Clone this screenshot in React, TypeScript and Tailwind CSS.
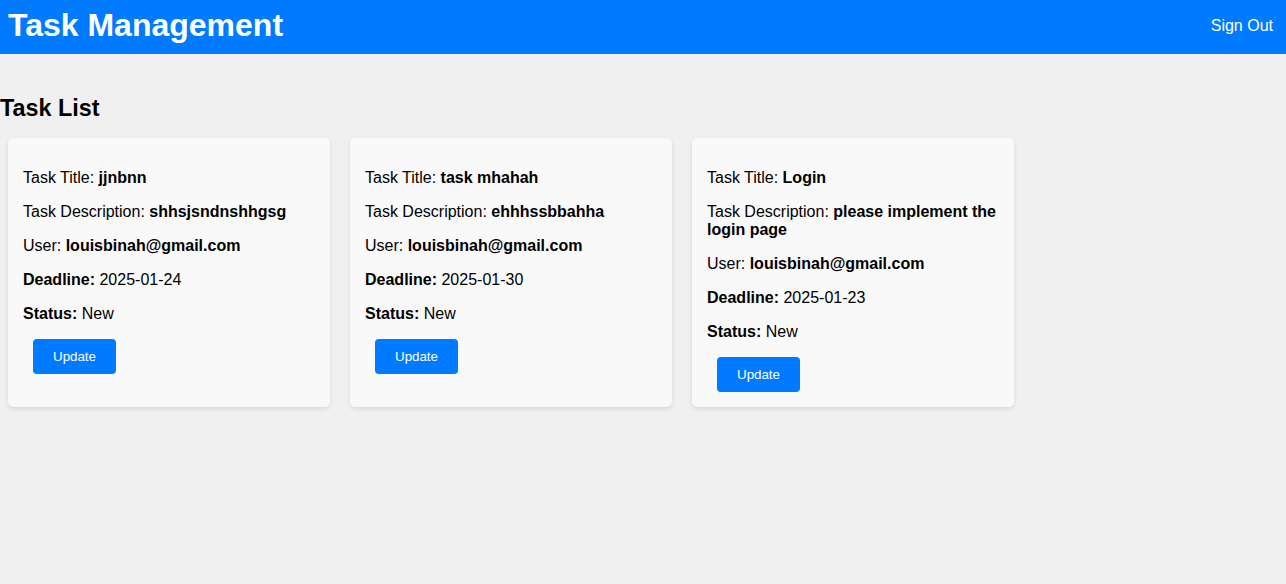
import React from 'react';

type Task = {
  title: string;
  description: string;
  user: string;
  deadline: string;
  status: string;
};

const tasks: Task[] = [
  { title: 'jjnbnn', description: 'shhsjsndnshhgsg', user: 'louisbinah@gmail.com', deadline: '2025-01-24', status: 'New' },
  { title: 'task mhahah', description: 'ehhhssbbahha', user: 'louisbinah@gmail.com', deadline: '2025-01-30', status: 'New' },
  { title: 'Login', description: 'please implement the login page', user: 'louisbinah@gmail.com', deadline: '2025-01-23', status: 'New' },
];

const TaskCard: React.FC<{ task: Task }> = ({ task }) => {
  return (
    <div className="w-[322px] bg-[#f9f9f9] rounded-[5px] shadow-[0_2px_4px_rgba(0,0,0,0.1)] p-[15px]">
      <p className="mt-4 mb-4 leading-[18px]">
        Task Title: <strong className="font-bold">{task.title}</strong>
      </p>
      <p className="mb-4 leading-[18px]">
        Task Description: <strong className="font-bold">{task.description}</strong>
      </p>
      <p className="mb-4 leading-[18px]">
        User: <strong className="font-bold">{task.user}</strong>
      </p>
      <p className="mb-4 leading-[18px]">
        <strong className="font-bold">Deadline:</strong> {task.deadline}
      </p>
      <p className="mb-4 leading-[18px]">
        <strong className="font-bold">Status:</strong> {task.status}
      </p>
      <button className="ml-[10px] px-5 h-[35px] bg-[#007bff] text-white text-[13.33px] rounded-[4px]">
        Update
      </button>
    </div>
  );
};

export default function App() {
  return (
    <div className="min-h-[584px] bg-[#f0f0f0] text-black font-['Liberation_Sans',Arial,sans-serif] text-base">
      <header className="h-[54px] bg-[#007bff] flex items-center justify-between pl-2 pr-[13px] pb-[3px]">
        <h1 className="text-[32px] font-bold text-white leading-[37px]">Task Management</h1>
        <button className="text-white text-base">Sign Out</button>
      </header>
      <main>
        <h2 className="text-[23.4px] font-bold leading-[28px] mt-[40px] mb-[16px]">Task List</h2>
        <div className="flex gap-5 px-2 items-stretch">
          {tasks.map((t) => (
            <TaskCard key={t.title} task={t} />
          ))}
        </div>
      </main>
    </div>
  );
}
